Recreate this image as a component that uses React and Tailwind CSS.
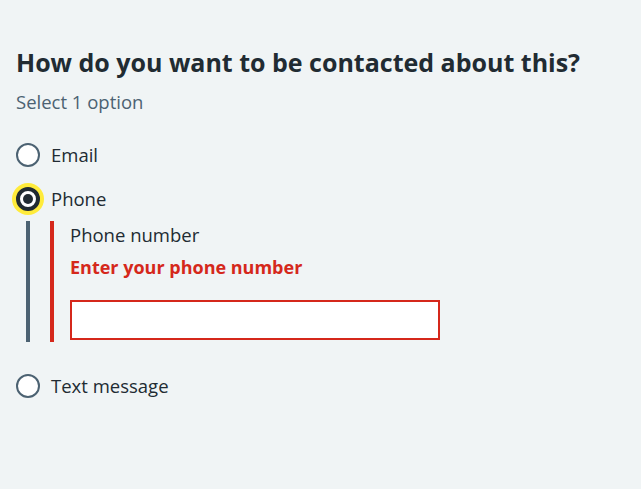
import { useState } from "react";

function Radio({ label, checked, focused, onChange }) {
    return (
        <label className="flex items-center h-10 cursor-pointer">
            <span className="relative flex items-center justify-center w-6 h-6">
                {focused && (
                    <span className="absolute -inset-1 rounded-full bg-[#ffeb3b]" />
                )}
                <span
                    className={`relative flex items-center justify-center w-6 h-6 rounded-full bg-white ${checked ? "border-4 border-[#212b32]" : "border-2 border-[#4c6272]"}`}
                >
                    {checked && <span className="w-[10px] h-[10px] rounded-full bg-[#212b32]" />}
                </span>
            </span>
            <input type="radio" className="sr-only" checked={checked} onChange={onChange} />
            <span className="ml-[11px] text-[18.5px] leading-7 text-[#212b32]">{label}</span>
        </label>
    );
}

export default function App() {
    const [choice, setChoice] = useState("phone");
    const [phone, setPhone] = useState("");

    return (
        <div
            className="w-[641px] h-[489px] bg-[#f0f4f5] px-4 pt-[46px]"
            style={{ fontFamily: '"Open Sans", "Liberation Sans", sans-serif' }}
        >
            <fieldset>
                <legend className="text-[25px] leading-8 font-bold text-[#212b32]">
                    How do you want to be contacted about this?
                </legend>
                <div className="mt-[10px] text-[18.5px] leading-7 text-[#4c6272]">Select 1 option</div>

                <div className="mt-[19px]">
                    <Radio label="Email" checked={choice === "email"} onChange={() => setChoice("email")} />
                    <div className="mt-1">
                        <Radio label="Phone" checked={choice === "phone"} focused onChange={() => setChoice("phone")} />
                    </div>
                    <div className="mt-[2px] ml-[10px] border-l-4 border-[#4c6272] pl-5">
                        <div className="border-l-4 border-[#d5281b] pl-4 pb-[2px]">
                            <div className="text-[18.5px] leading-7 text-[#212b32]">Phone number</div>
                            <div className="mt-1 text-[18px] leading-7 font-bold text-[#d5281b]">
                                Enter your phone number
                            </div>
                            <input
                                type="tel"
                                value={phone}
                                onChange={(e) => setPhone(e.target.value)}
                                className="mt-[19px] block w-[370px] h-10 bg-white border-2 border-[#d5281b] px-2 outline-none"
                            />
                        </div>
                    </div>
                    <div className="mt-[24px]">
                        <Radio label="Text message" checked={choice === "text"} onChange={() => setChoice("text")} />
                    </div>
                </div>
            </fieldset>
        </div>
    );
}
